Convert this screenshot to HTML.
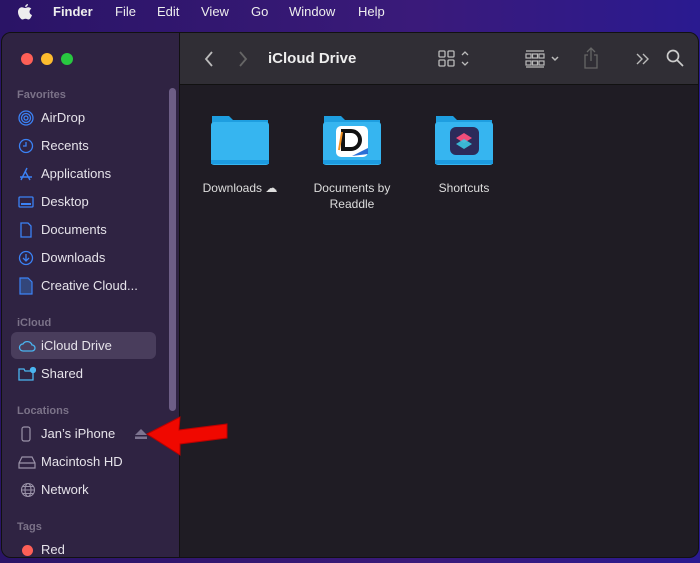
<!DOCTYPE html><html><head><style>
*{margin:0;padding:0;box-sizing:border-box}
body{width:700px;height:563px;overflow:hidden;background:linear-gradient(90deg,#2a1466,#3a1a7a 60%,#2a1a90);font-family:"Liberation Sans",sans-serif;position:relative}
.menu{position:absolute;top:0;left:0;width:700px;height:24px;color:#eee;font-size:13px}
.menu span{position:absolute;top:4px}
.win{position:absolute;left:1px;top:32px;width:698px;height:526px;border-radius:10px;overflow:hidden;border:1px solid #111;background:#1f1c24}
.side{position:absolute;left:0;top:0;width:178px;height:100%;background:#2f2342;border-right:1px solid #111}
.tb{position:absolute;left:178px;top:0;right:0;height:52px;background:#302e35;border-bottom:1px solid #111}
.dot{position:absolute;top:20px;width:12px;height:12px;border-radius:50%}
.sec{position:absolute;left:15px;font-size:11px;color:#7b7288;font-weight:bold}
.it{position:absolute;left:39px;font-size:13px;color:#e6e3ea}
.ic{position:absolute;left:16px}
.lab{position:absolute;font-size:12px;color:#ddd;text-align:center;width:110px;line-height:16px}
</style></head><body>
<div class="menu">
<svg style="position:absolute;left:17px;top:3px" width="16" height="18" viewBox="0 0 16 18" fill="#eee"><path d="M11 1c0 1.5-1.2 3-2.8 3C8 2.5 9.4 1.1 11 1zM8 5c1 0 2-0.8 3.3-0.8 1 0 2.3.5 3 1.6-2.7 1.5-2.2 5.3.7 6.3-.6 1.7-2 4.4-3.5 4.4-1.2 0-1.5-.7-3-.7s-1.9.7-3 .7C3.7 16.5 1 12.5 1 9c0-3 2-4.8 3.8-4.8C6.1 4.2 7 5 8 5z"/></svg>
<span style="left:53px;font-weight:bold">Finder</span><span style="left:115px">File</span><span style="left:157px">Edit</span><span style="left:201px">View</span><span style="left:251px">Go</span><span style="left:289px">Window</span><span style="left:358px">Help</span>
</div>
<div class="win">
<div class="side">
<div class="dot" style="left:19px;background:#fe5f57"></div><div class="dot" style="left:39px;background:#febc2e"></div><div class="dot" style="left:59px;background:#28c840"></div>
<div style="position:absolute;left:167px;top:55px;width:7px;height:323px;border-radius:4px;background:#6d5e86"></div>
<div class="sec" style="top:56px">Favorites</div>
<svg class="ic" style="top:77px" width="16" height="16" viewBox="0 0 16 16" fill="none" stroke="#3b82f6" stroke-width="1.3"><circle cx="8" cy="8" r="2"/><circle cx="8" cy="8" r="4.5"/><circle cx="8" cy="8" r="7"/></svg><div class="it" style="top:77px">AirDrop</div>
<svg class="ic" style="top:105px" width="16" height="16" viewBox="0 0 16 16" fill="none" stroke="#3b82f6" stroke-width="1.3"><circle cx="8" cy="8" r="6.5"/><path d="M8 4v4H5"/></svg><div class="it" style="top:105px">Recents</div>
<svg class="ic" style="top:133px" width="16" height="16" viewBox="0 0 16 16" fill="none" stroke="#3b82f6" stroke-width="1.4"><path d="M3 14L9 2M7 5l5 9M2 11h12"/></svg><div class="it" style="top:133px">Applications</div>
<svg class="ic" style="top:161px" width="16" height="16" viewBox="0 0 16 16" fill="none" stroke="#3b82f6" stroke-width="1.3"><rect x="1" y="3" width="14" height="10" rx="1"/><path d="M3 10h10" stroke-width="2"/></svg><div class="it" style="top:161px">Desktop</div>
<svg class="ic" style="top:189px" width="16" height="16" viewBox="0 0 16 16" fill="none" stroke="#3b82f6" stroke-width="1.3"><path d="M3 1h7l3 3v11H3z"/></svg><div class="it" style="top:189px">Documents</div>
<svg class="ic" style="top:217px" width="16" height="16" viewBox="0 0 16 16" fill="none" stroke="#3b82f6" stroke-width="1.3"><circle cx="8" cy="8" r="6.5"/><path d="M8 4v7M5 8l3 3 3-3"/></svg><div class="it" style="top:217px">Downloads</div>
<svg class="ic" style="top:244px" width="16" height="18" viewBox="0 0 16 18" fill="#33467a" stroke="#3b82f6" stroke-width="1.2"><path d="M2 1h8l4 4v12H2z"/></svg><div class="it" style="top:245px">Creative Cloud...</div>
<div class="sec" style="top:284px">iCloud</div>
<div style="position:absolute;left:9px;top:299px;width:145px;height:27px;border-radius:6px;background:#493d5c"></div>
<svg class="ic" style="top:305px" width="18" height="16" viewBox="0 0 18 16" fill="none" stroke="#4ab4f0" stroke-width="1.3"><path d="M5 13h9a3 3 0 0 0 0-6 5 5 0 0 0-9-1 3.5 3.5 0 0 0 0 7z"/></svg><div class="it" style="top:305px">iCloud Drive</div>
<svg class="ic" style="top:333px" width="18" height="16" viewBox="0 0 18 16" fill="none" stroke="#4ab4f0" stroke-width="1.3"><path d="M1 3h5l1 2h8v9H1z"/><circle cx="15" cy="4" r="2.5" fill="#4ab4f0"/></svg><div class="it" style="top:333px">Shared</div>
<div class="sec" style="top:372px">Locations</div>
<svg class="ic" style="top:393px;left:19px" width="10" height="16" viewBox="0 0 10 16" fill="none" stroke="#9a92a8" stroke-width="1.2"><rect x="1" y="1" width="8" height="14" rx="2"/></svg><div class="it" style="top:393px">Jan’s iPhone</div>
<svg style="position:absolute;left:133px;top:396px" width="12" height="10" viewBox="0 0 12 10" fill="#7d7490"><path d="M6 0l6 6H0z"/><rect x="0" y="7.5" width="12" height="2.5"/></svg>
<svg class="ic" style="top:421px" width="18" height="16" viewBox="0 0 18 16" fill="none" stroke="#9a92a8" stroke-width="1.2"><path d="M4 3h10l3 6v5H1V9z M1 9h16"/></svg><div class="it" style="top:421px">Macintosh HD</div>
<svg class="ic" style="top:449px;left:18px" width="16" height="16" viewBox="0 0 16 16" fill="none" stroke="#9a92a8" stroke-width="1.1"><circle cx="8" cy="8" r="6.5"/><ellipse cx="8" cy="8" rx="3" ry="6.5"/><path d="M1.5 8h13M3 4.5h10M3 11.5h10"/></svg><div class="it" style="top:449px">Network</div>
<div class="sec" style="top:488px">Tags</div>
<div style="position:absolute;left:20px;top:512px;width:11px;height:11px;border-radius:50%;background:#fe5f57"></div><div class="it" style="top:509px">Red</div>
</div>
<div class="tb">
<svg style="position:absolute;left:23px;top:17px" width="12" height="18" viewBox="0 0 12 18" fill="none" stroke="#bbb" stroke-width="1.8"><path d="M9 2L3 9l6 7"/></svg>
<svg style="position:absolute;left:57px;top:17px" width="12" height="18" viewBox="0 0 12 18" fill="none" stroke="#666" stroke-width="1.8"><path d="M3 2l6 7-6 7"/></svg>
<div style="position:absolute;left:88px;top:17px;color:#eee;font-weight:bold;font-size:15px">iCloud Drive</div>
<svg style="position:absolute;left:258px;top:16px" width="40" height="20" viewBox="0 0 40 20" fill="none" stroke="#bbb" stroke-width="1.3"><rect x="1" y="2" width="6" height="6" rx="1"/><rect x="10" y="2" width="6" height="6" rx="1"/><rect x="1" y="11" width="6" height="6" rx="1"/><rect x="10" y="11" width="6" height="6" rx="1"/><path d="M24 6l3-3 3 3M24 13l3 3 3-3"/></svg>
<svg style="position:absolute;left:345px;top:16px" width="40" height="20" viewBox="0 0 40 20" fill="none" stroke="#bbb" stroke-width="1.2"><path d="M1 2h18M1 18h18"/><rect x="1" y="5" width="5" height="4"/><rect x="7.5" y="5" width="5" height="4"/><rect x="14" y="5" width="5" height="4"/><rect x="1" y="12" width="5" height="4"/><rect x="7.5" y="12" width="5" height="4"/><rect x="14" y="12" width="5" height="4"/><path d="M27 8l3 3 3-3" stroke-width="1.5"/></svg>
<svg style="position:absolute;left:402px;top:13px" width="18" height="24" viewBox="0 0 18 24" fill="none" stroke="#666" stroke-width="1.3"><path d="M9 2v13M5 6l4-4 4 4M6 9H3v13h12V9h-3"/></svg>
<svg style="position:absolute;left:455px;top:18px" width="16" height="16" viewBox="0 0 16 16" fill="none" stroke="#bbb" stroke-width="1.4"><path d="M2 3l5 5-5 5M8 3l5 5-5 5"/></svg>
<svg style="position:absolute;left:486px;top:16px" width="18" height="18" viewBox="0 0 18 18" fill="none" stroke="#ccc" stroke-width="1.7"><circle cx="7" cy="7" r="5.5"/><path d="M11 11l6 6"/></svg>
</div>
<svg style="position:absolute;left:208px;top:81px" width="60" height="52" viewBox="0 0 60 52"><path d="M2 2h17l4 4h35v44H2z" fill="#1e9ee0"/><rect x="1" y="8" width="58" height="43" rx="3" fill="#36b5f0"/><rect x="1" y="46" width="58" height="4" fill="#1c9be0"/></svg>
<svg style="position:absolute;left:320px;top:81px" width="60" height="52" viewBox="0 0 60 52"><path d="M2 2h17l4 4h35v44H2z" fill="#1e9ee0"/><rect x="1" y="8" width="58" height="43" rx="3" fill="#36b5f0"/><rect x="1" y="46" width="58" height="4" fill="#1c9be0"/><rect x="14" y="12" width="32" height="31" rx="5" fill="#fff"/><path d="M21 17h8a9 9 0 0 1 0 18h-8z" fill="none" stroke="#111" stroke-width="4"/><path d="M20 18l-3 18" stroke="#f39220" stroke-width="2"/><path d="M30 42l16-8v6z" fill="#2a6fd6"/></svg>
<svg style="position:absolute;left:432px;top:81px" width="60" height="52" viewBox="0 0 60 52"><path d="M2 2h17l4 4h35v44H2z" fill="#1e9ee0"/><rect x="1" y="8" width="58" height="43" rx="3" fill="#36b5f0"/><rect x="1" y="46" width="58" height="4" fill="#1c9be0"/><rect x="16" y="13" width="29" height="28" rx="6" fill="#2c2b5a"/><path d="M30 19l8 5-8 5-8-5z" fill="#ef4d7a"/><path d="M30 25l8 5-8 5-8-5z" fill="#3cc5e0" opacity=".9"/></svg>
<div class="lab" style="left:183px;top:147px">Downloads ☁</div>
<div class="lab" style="left:295px;top:147px">Documents by<br>Readdle</div>
<div class="lab" style="left:407px;top:147px">Shortcuts</div>
</div>
<svg style="position:absolute;left:145px;top:416px" width="84" height="40" viewBox="0 0 84 40"><path d="M2 18L35 1l-1 13 48-6v14l-47 6 0 11z" fill="#f00800" stroke="#b00" stroke-width="1"/></svg>
</body></html>
